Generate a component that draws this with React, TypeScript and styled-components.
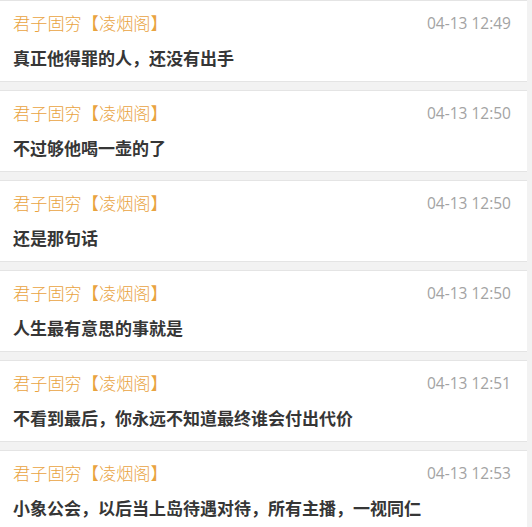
import styled, { createGlobalStyle } from "styled-components";

const GlobalStyle = createGlobalStyle`
  html, body {
    margin: 0;
    padding: 0;
    background: #f2f2f2;
  }
  body {
    font-family: "Noto Sans CJK SC", "Noto Sans", sans-serif;
  }
`

const List = styled.div`
  width: 527px;
  display: flex;
  flex-direction: column;
  gap: 8px;
`

const Card = styled.div`
  background: #fff;
  border-top: 1px solid #e4e4e4;
  border-bottom: 1px solid #e4e4e4;
  padding: 11px 16px 11px 13px;
  display: flex;
  flex-direction: column;
  gap: 12px;
`

const Head = styled.div`
  display: flex;
  justify-content: space-between;
  align-items: center;
  height: 22px;
`

const Name = styled.span`
  font-size: 17.2px;
  line-height: 22px;
  color: #e9a33f;
  font-weight: 300;
`

const Time = styled.span`
  font-family: "Open Sans", "Noto Sans", sans-serif;
  font-size: 15.5px;
  line-height: 22px;
  color: #a3a3a3;
`

const Msg = styled.div`
  font-size: 17px;
  line-height: 24px;
  font-weight: 700;
  color: #363636;
`

const comments = [
  { time: "04-13 12:49", text: "真正他得罪的人，还没有出手" },
  { time: "04-13 12:50", text: "不过够他喝一壶的了" },
  { time: "04-13 12:50", text: "还是那句话" },
  { time: "04-13 12:50", text: "人生最有意思的事就是" },
  { time: "04-13 12:51", text: "不看到最后，你永远不知道最终谁会付出代价" },
  { time: "04-13 12:53", text: "小象公会，以后当上岛待遇对待，所有主播，一视同仁" },
]

const App = () => {
  return (
    <>
      <GlobalStyle />
      <List>
        {comments.map((c, i) => (
          <Card key={i}>
            <Head>
              <Name>君子固穷【凌烟阁】</Name>
              <Time>{c.time}</Time>
            </Head>
            <Msg>{c.text}</Msg>
          </Card>
        ))}
      </List>
    </>
  )
}

export default App
